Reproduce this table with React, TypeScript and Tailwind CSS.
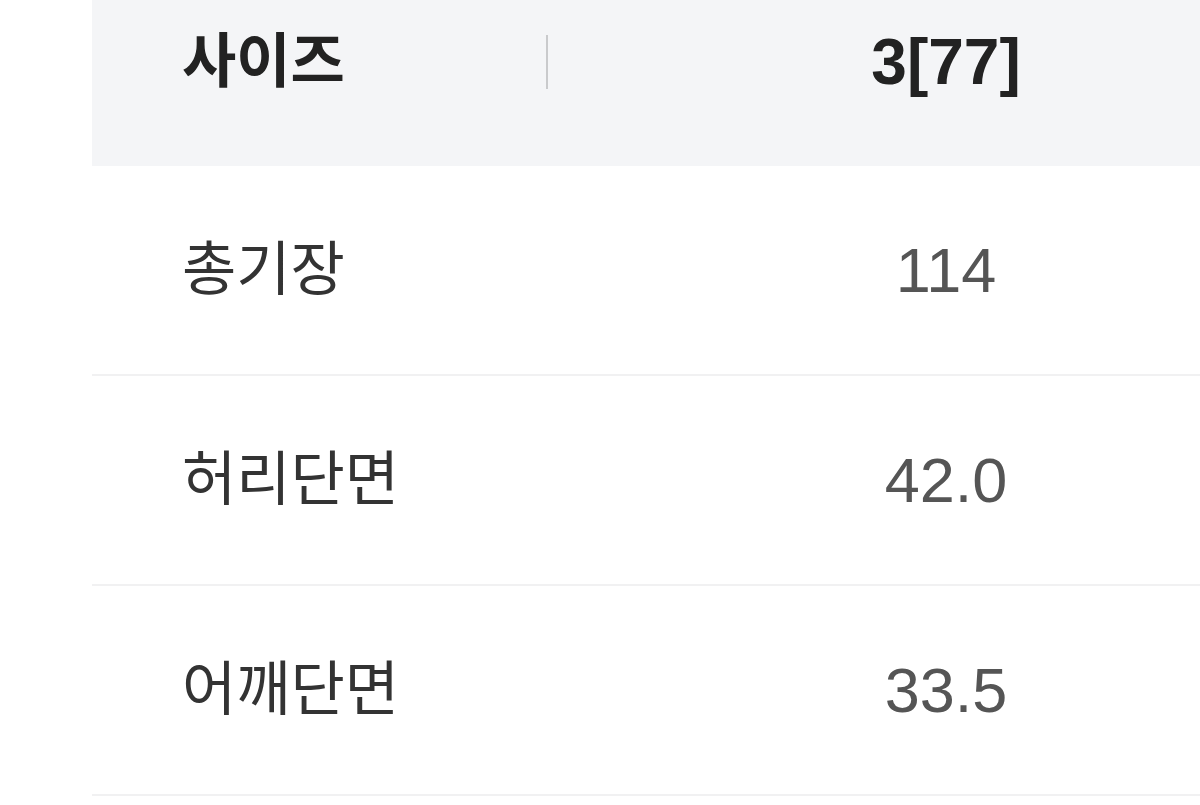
import React from "react";

const rows = [
    { label: "총기장", value: "114" },
    { label: "허리단면", value: "42.0" },
    { label: "어깨단면", value: "33.5" },
];

const font = {
    fontFamily: '"Liberation Sans", "Noto Sans CJK KR", sans-serif',
};

const App: React.FC = () => {
    return (
        <div
            className="w-[1200px] h-[805px] overflow-hidden bg-white pl-[92px]"
            style={font}
        >
            <div className="w-[1252px]">
                {/* Header */}
                <div className="-mt-[42px] h-[208px] flex items-center bg-[#f4f5f7]">
                    <div className="w-[454px] pl-[90px] text-[59px] font-bold text-[#222222]">
                        사이즈
                    </div>
                    <div className="w-[2px] h-[54px] bg-[#c9cacc]" />
                    <div className="w-[796px] text-center text-[64px] font-bold text-[#222222]">
                        3[77]
                    </div>
                </div>

                {/* Rows */}
                {rows.map((row) => (
                    <div
                        key={row.label}
                        className="h-[210px] flex items-center border-b-2 border-[#f1f1f2]"
                    >
                        <div className="w-[454px] pl-[90px] text-[59px] text-[#333333]">
                            {row.label}
                        </div>
                        <div className="w-[2px]" />
                        <div className="w-[796px] text-center text-[63px] text-[#555555]">
                            {row.value}
                        </div>
                    </div>
                ))}
            </div>
        </div>
    );
};

export default App;
